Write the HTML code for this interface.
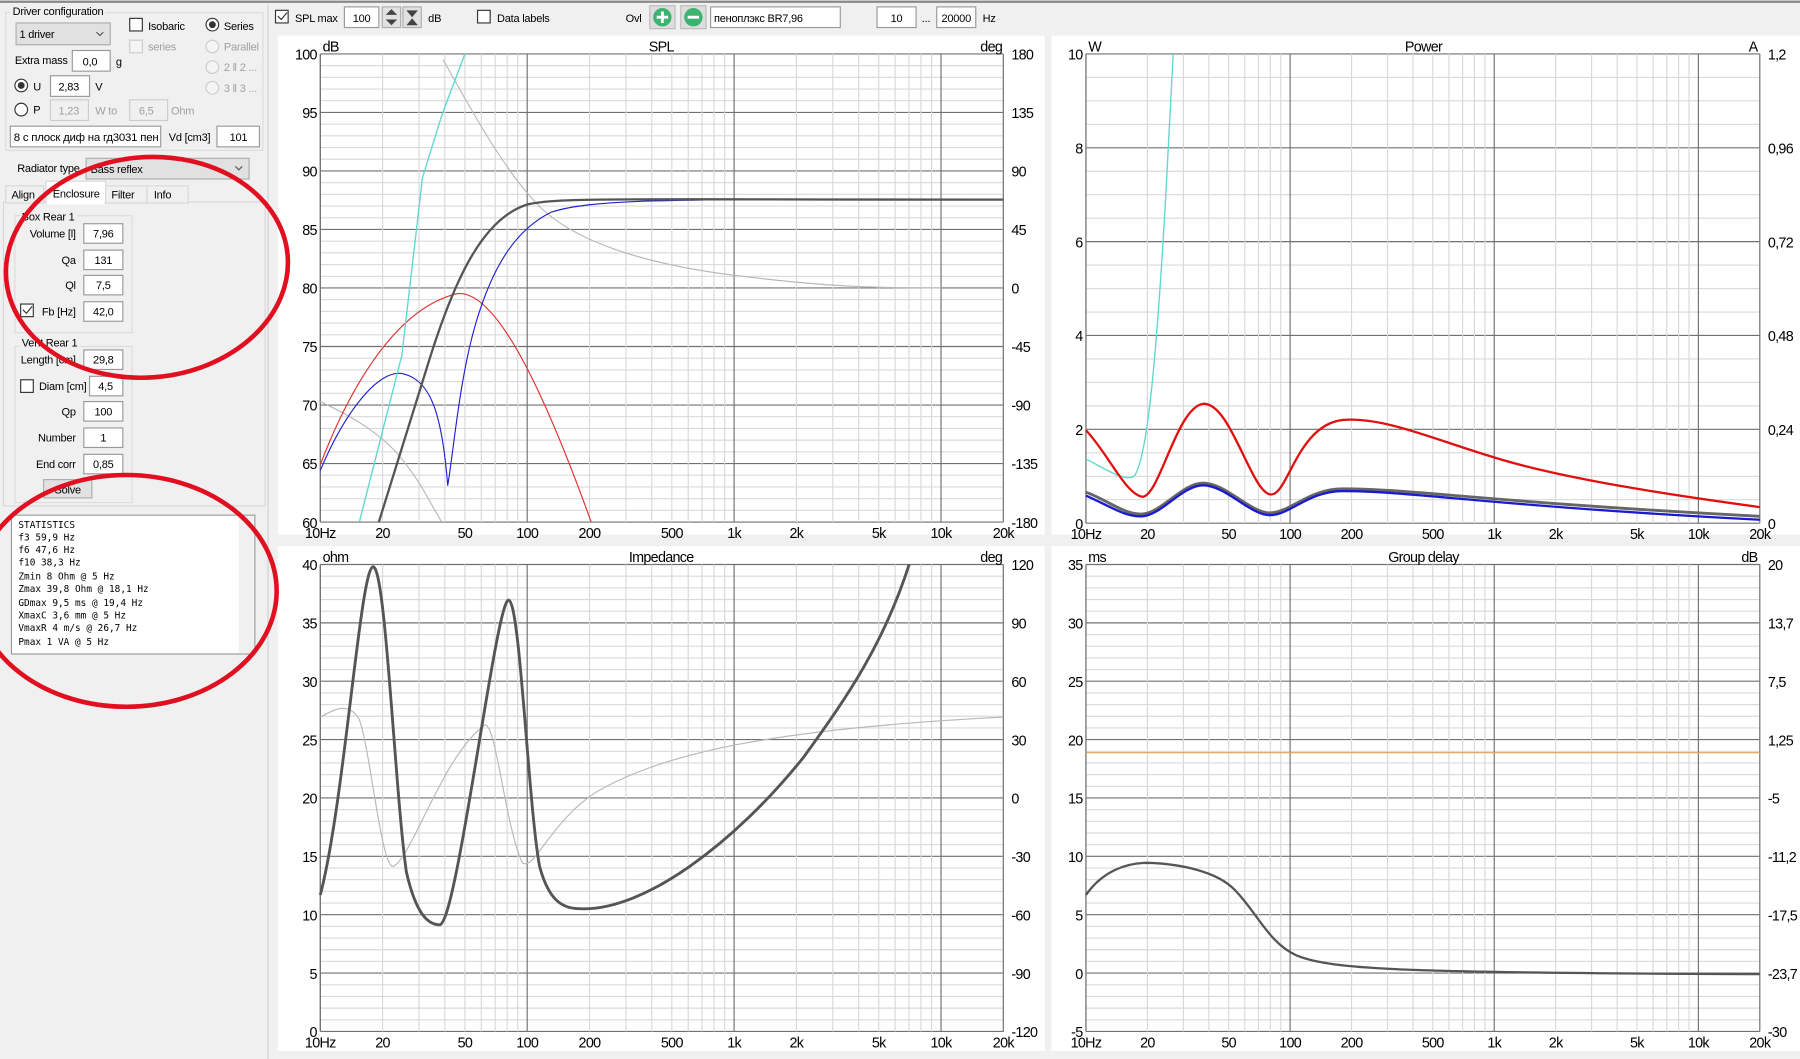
<!DOCTYPE html>
<html><head><meta charset="utf-8">
<style>
html,body{margin:0;padding:0;background:#f0f0f0;overflow:hidden}
svg{display:block}
text{font-family:"Liberation Sans","DejaVu Sans",sans-serif;fill:#000}
.m{font-family:"DejaVu Sans Mono","Liberation Mono",monospace;font-size:8.2px}
.s{font-size:9.6px;letter-spacing:-0.2px}
.a{font-size:12.5px;letter-spacing:-0.6px}
.g{fill:#a0a0a0}
</style></head><body>
<svg id="sv" width="1800" height="1059" viewBox="0 0 1568 923" preserveAspectRatio="none" xmlns="http://www.w3.org/2000/svg">
<rect width="1568" height="923" fill="#f0f0f0"/>
<line x1="0" y1="1.5" x2="1568" y2="1.5" stroke="#888" stroke-width="2"/>
<rect x="242" y="31" width="668" height="435" fill="#fff"/>
<rect x="916" y="31" width="652" height="435" fill="#fff"/>
<rect x="242" y="476" width="668" height="440" fill="#fff"/>
<rect x="916" y="476" width="652" height="440" fill="#fff"/>
<line x1="233.5" y1="4" x2="233.5" y2="923" stroke="#d0d0d0"/>
<g id="grid"></g>

<!-- LEFT PANEL -->
<rect x="5" y="11" width="224" height="120" fill="none" stroke="#dcdcdc"/>
<rect x="9" y="4" width="83" height="12" fill="#f0f0f0"/>
<text x="11" y="13" class="s">Driver configuration</text>
<rect x="14" y="20" width="82" height="19" fill="#e1e1e1" stroke="#adadad"/>
<text x="17" y="33" class="s">1 driver</text>
<path d="M84 28l3 3 3-3" fill="none" stroke="#555"/>
<rect x="113" y="16" width="11" height="11" fill="#fff" stroke="#333"/><text x="129" y="26" class="s">Isobaric</text>
<rect x="113" y="35" width="11" height="11" fill="#f4f4f4" stroke="#ccc"/><text x="129" y="44" class="s g">series</text>
<circle cx="185" cy="21.5" r="5.5" fill="#fff" stroke="#333"/><circle cx="185" cy="21.5" r="3" fill="#333"/><text x="195" y="26" class="s">Series</text>
<circle cx="185" cy="40.5" r="5.5" fill="#f4f4f4" stroke="#ccc"/><text x="195" y="44" class="s g">Parallel</text>
<circle cx="185" cy="58.5" r="5.5" fill="#f4f4f4" stroke="#ccc"/><text x="195" y="62" class="s g">2 ‖ 2 ...</text>
<circle cx="185" cy="76.5" r="5.5" fill="#f4f4f4" stroke="#ccc"/><text x="195" y="80" class="s g">3 ‖ 3 ...</text>
<text x="13" y="56" class="s">Extra mass</text>
<rect x="63" y="44" width="33" height="18" fill="#fff" stroke="#999"/><text x="72" y="57" class="s">0,0</text><text x="101" y="57" class="s">g</text>
<circle cx="18.5" cy="74.5" r="5.5" fill="#fff" stroke="#333"/><circle cx="18.5" cy="74.5" r="3" fill="#333"/><text x="29" y="79" class="s">U</text>
<rect x="44" y="66" width="34" height="18" fill="#fff" stroke="#999"/><text x="51" y="79" class="s">2,83</text><text x="83" y="79" class="s">V</text>
<circle cx="18.5" cy="95.5" r="5.5" fill="#fff" stroke="#333"/><text x="29" y="99" class="s">P</text>
<rect x="44" y="87" width="33" height="18" fill="#f0f0f0" stroke="#ccc"/><text x="51" y="100" class="s g">1,23</text><text x="83" y="100" class="s g">W to</text>
<rect x="113" y="87" width="33" height="18" fill="#f0f0f0" stroke="#ccc"/><text x="121" y="100" class="s g">6,5</text><text x="149" y="100" class="s g">Ohm</text>
<rect x="9" y="110" width="131" height="18" fill="#fff" stroke="#999"/><text x="12" y="123" class="s" textLength="126" lengthAdjust="spacingAndGlyphs">8 с плоск диф на гд3031 пен</text>
<text x="147" y="123" class="s">Vd [cm3]</text>
<rect x="189" y="110" width="37" height="18" fill="#fff" stroke="#999"/><text x="200" y="123" class="s">101</text>
<text x="15" y="150" class="s">Radiator type</text>
<rect x="75" y="138" width="142" height="18" fill="#e1e1e1" stroke="#adadad"/><text x="79" y="151" class="s">Bass reflex</text>
<path d="M205 145l3 3 3-3" fill="none" stroke="#555"/>
<rect x="3" y="176" width="228" height="265" fill="#f0f0f0" stroke="#d8d8d8"/>
<rect x="5" y="162" width="33" height="15" fill="#f0f0f0" stroke="#d8d8d8"/><text x="10" y="173" class="s">Align</text>
<rect x="40" y="158" width="52" height="19" fill="#fff" stroke="#d8d8d8"/><line x1="41" y1="177" x2="91" y2="177" stroke="#fff" stroke-width="2"/><text x="46" y="172" class="s">Enclosure</text>
<rect x="92" y="162" width="36" height="15" fill="#f0f0f0" stroke="#d8d8d8"/><text x="97" y="173" class="s">Filter</text>
<rect x="128" y="162" width="36" height="15" fill="#f0f0f0" stroke="#d8d8d8"/><text x="134" y="173" class="s">Info</text>
<rect x="13" y="188" width="102" height="102" fill="none" stroke="#dcdcdc"/>
<rect x="17" y="182" width="50" height="12" fill="#f0f0f0"/><text x="19" y="192" class="s">Box Rear 1</text>
<text x="66" y="207" class="s" text-anchor="end">Volume [l]</text><rect x="73" y="195" width="34" height="17" fill="#fff" stroke="#999"/><text x="90" y="207" class="s" text-anchor="middle">7,96</text>
<text x="66" y="230" class="s" text-anchor="end">Qa</text><rect x="73" y="218" width="34" height="17" fill="#fff" stroke="#999"/><text x="90" y="230" class="s" text-anchor="middle">131</text>
<text x="66" y="252" class="s" text-anchor="end">Ql</text><rect x="73" y="240" width="34" height="17" fill="#fff" stroke="#999"/><text x="90" y="252" class="s" text-anchor="middle">7,5</text>
<rect x="18" y="265" width="11" height="11" fill="#fff" stroke="#333"/><path d="M20 270l3 3 5-6" fill="none" stroke="#333"/>
<text x="66" y="275" class="s" text-anchor="end">Fb [Hz]</text><rect x="73" y="263" width="34" height="17" fill="#fff" stroke="#999"/><text x="90" y="275" class="s" text-anchor="middle">42,0</text>
<rect x="13" y="302" width="102" height="136" fill="none" stroke="#dcdcdc"/>
<rect x="17" y="295" width="53" height="12" fill="#f0f0f0"/><text x="19" y="302" class="s">Vent Rear 1</text>
<text x="66" y="317" class="s" text-anchor="end">Length [cm]</text><rect x="73" y="305" width="34" height="17" fill="#fff" stroke="#999"/><text x="90" y="317" class="s" text-anchor="middle">29,8</text>
<rect x="18" y="331" width="11" height="11" fill="#fff" stroke="#333"/><text x="34" y="340" class="s">Diam [cm]</text><rect x="78" y="328" width="29" height="17" fill="#fff" stroke="#999"/><text x="92" y="340" class="s" text-anchor="middle">4,5</text>
<text x="66" y="362" class="s" text-anchor="end">Qp</text><rect x="73" y="350" width="34" height="17" fill="#fff" stroke="#999"/><text x="90" y="362" class="s" text-anchor="middle">100</text>
<text x="66" y="385" class="s" text-anchor="end">Number</text><rect x="73" y="373" width="34" height="17" fill="#fff" stroke="#999"/><text x="90" y="385" class="s" text-anchor="middle">1</text>
<text x="66" y="408" class="s" text-anchor="end">End corr</text><rect x="73" y="396" width="34" height="17" fill="#fff" stroke="#999"/><text x="90" y="408" class="s" text-anchor="middle">0,85</text>
<rect x="38" y="418" width="42" height="16" fill="#e1e1e1" stroke="#adadad"/><text x="59" y="430" class="s" text-anchor="middle">Solve</text>
<rect x="10" y="449" width="212" height="121" fill="#fff" stroke="#999"/>
<rect x="208" y="450" width="13" height="119" fill="#f0f0f0"/>
<text class="m"><tspan x="16" y="460">STATISTICS</tspan><tspan x="16" y="471">f3 59,9 Hz</tspan><tspan x="16" y="482">f6 47,6 Hz</tspan><tspan x="16" y="493">f10 38,3 Hz</tspan><tspan x="16" y="505">Zmin 8 Ohm @ 5 Hz</tspan><tspan x="16" y="516">Zmax 39,8 Ohm @ 18,1 Hz</tspan><tspan x="16" y="528">GDmax 9,5 ms  @ 19,4 Hz</tspan><tspan x="16" y="539">XmaxC 3,6 mm  @ 5 Hz</tspan><tspan x="16" y="550">VmaxR 4 m/s @ 26,7 Hz</tspan><tspan x="16" y="562">Pmax 1 VA  @ 5 Hz</tspan></text>

<!-- TOP TOOLBAR -->
<rect x="240" y="9" width="11" height="11" fill="#fff" stroke="#333"/><path d="M242 14l3 3 5-6" fill="none" stroke="#333"/>
<text x="257" y="19" class="s">SPL max</text>
<rect x="300" y="6" width="30" height="18" fill="#fff" stroke="#999"/><text x="315" y="19" class="s" text-anchor="middle">100</text>
<rect x="333" y="6" width="16" height="18" fill="#e1e1e1" stroke="#adadad"/><path d="M336 13l5-5 5 5zM336 17l5 5 5-5z" fill="#444"/>
<rect x="351" y="6" width="16" height="18" fill="#e1e1e1" stroke="#adadad"/><path d="M354 9h10l-5 6zM354 22h10l-5-6z" fill="#444"/>
<text x="373" y="19" class="s">dB</text>
<rect x="416" y="9" width="11" height="11" fill="#fff" stroke="#333"/><text x="433" y="19" class="s">Data labels</text>
<text x="545" y="19" class="s">Ovl</text>
<rect x="566" y="5" width="22" height="20" fill="#ddd" stroke="#bbb"/><circle cx="577" cy="15" r="8" fill="#3cb371"/><path d="M572 15h10M577 10v10" stroke="#fff" stroke-width="2.5"/>
<rect x="593" y="5" width="22" height="20" fill="#ddd" stroke="#bbb"/><circle cx="604" cy="15" r="8" fill="#3cb371"/><path d="M599 15h10" stroke="#fff" stroke-width="2.5"/>
<rect x="619" y="6" width="113" height="18" fill="#fff" stroke="#999"/><text x="622" y="19" class="s">пеноплэкс BR7,96</text>
<rect x="764" y="6" width="34" height="18" fill="#fff" stroke="#999"/><text x="781" y="19" class="s" text-anchor="middle">10</text>
<text x="803" y="19" class="s">...</text>
<rect x="816" y="6" width="34" height="18" fill="#fff" stroke="#999"/><text x="833" y="19" class="s" text-anchor="middle">20000</text>
<text x="856" y="19" class="s">Hz</text>

<g class="a">
<text x="576" y="45" text-anchor="middle" class="a">SPL</text>
<text x="281" y="45" class="a">dB</text><text x="873" y="45" class="a" text-anchor="end">deg</text>
<text x="1240" y="45" text-anchor="middle" class="a">Power</text>
<text x="948" y="45" class="a">W</text><text x="1531" y="45" class="a" text-anchor="end">A</text>
<text x="576" y="490" text-anchor="middle" class="a">Impedance</text>
<text x="281" y="490" class="a">ohm</text><text x="873" y="490" class="a" text-anchor="end">deg</text>
<text x="1240" y="490" text-anchor="middle" class="a">Group delay</text>
<text x="948" y="490" class="a">ms</text><text x="1531" y="490" class="a" text-anchor="end">dB</text>
</g>
<g id="labels"></g>

<g fill="none" stroke-linejoin="round">
<path d="M386 52 C410 95 440 150 470 180 S560 230 640 240 S760 251 820 251" stroke="#b8b8b8" stroke-width="1"/>
<path d="M279 350 C300 360 330 375 350 400 S375 440 385 455" stroke="#b8b8b8" stroke-width="1"/>
<path d="M279 405 C300 350 340 270 398 256 C430 252 470 330 515 455" stroke="#e03030" stroke-width="1"/>
<path d="M279 410 C300 360 330 320 352 326 C375 332 385 360 390 423 C395 395 400 330 415 280 C430 230 450 200 480 185 C520 172 600 174 874 174" stroke="#2020d0" stroke-width="1"/>
<path d="M330 455 L372 320 C395 245 420 190 460 178 C490 172 530 174 874 174" stroke="#555" stroke-width="2"/>
<path d="M313 455 L350 310 L368 155 L385 100 L405 47" stroke="#60d8d0" stroke-width="1.2"/>
<path d="M946 400 C965 410 980 420 988 415 C1000 400 1008 300 1015 180 L1022 47" stroke="#60d8d0" stroke-width="1.2"/>
<path d="M946 375 C965 395 980 430 995 433 C1010 433 1025 355 1048 352 C1072 350 1090 430 1107 431 C1122 432 1130 370 1170 366 C1210 363 1260 388 1320 404 S1460 432 1533 442" stroke="#e01010" stroke-width="2"/>
<path d="M946 429 C965 436 980 449 995 448 C1012 447 1030 421 1048 421 C1068 421 1090 448 1107 447 C1125 446 1140 426 1170 426 C1230 426 1300 438 1533 450" stroke="#666" stroke-width="2.5"/>
<path d="M946 432 C965 440 980 451 995 450 C1012 449 1030 423 1048 423 C1068 423 1090 450 1107 449 C1125 448 1140 428 1170 428 C1230 428 1300 441 1533 453" stroke="#1a1ad0" stroke-width="2"/>
<path d="M279 625 C292 618 302 612 312 625 C322 645 332 760 343 755 C360 745 385 660 422 632 C432 628 440 720 455 752 C465 760 480 715 520 690 C580 655 680 635 874 625" stroke="#b8b8b8" stroke-width="1"/>
<path d="M279 780 C300 700 314 494 325 494 C336 494 344 690 354 760 C362 795 372 806 383 806 C398 806 432 523 443 523 C453 523 460 700 470 755 C478 785 490 792 505 792 C560 795 640 735 700 660 C740 605 770 560 792 492" stroke="#555" stroke-width="2.5"/>
<line x1="946" y1="656" x2="1533" y2="656" stroke="#e0a050" stroke-width="1"/>
<path d="M946 780 C960 760 980 752 1000 752 C1030 753 1060 760 1075 775 C1095 795 1105 822 1130 833 C1160 845 1220 848 1533 849" stroke="#555" stroke-width="2"/>
</g>

<ellipse cx="128" cy="233" rx="123" ry="96" fill="none" stroke="#e01020" stroke-width="4" transform="rotate(-5 128 233)"/>
<ellipse cx="110" cy="515" rx="131" ry="101" fill="none" stroke="#e01020" stroke-width="4"/>
</svg>
<script>
(function(){
var NS="http://www.w3.org/2000/svg",G=document.getElementById("grid"),L=document.getElementById("labels");
function ln(x1,y1,x2,y2,c,w){var e=document.createElementNS(NS,"line");e.setAttribute("x1",x1);e.setAttribute("y1",y1);e.setAttribute("x2",x2);e.setAttribute("y2",y2);e.setAttribute("stroke",c);e.setAttribute("stroke-width",w||1);G.appendChild(e);}
function tx(x,y,s,anc){var e=document.createElementNS(NS,"text");e.setAttribute("x",x);e.setAttribute("y",y);e.setAttribute("class","a");if(anc)e.setAttribute("text-anchor",anc);e.textContent=s;L.appendChild(e);}
function plot(x0,x1,y0,y1,nMinor,nMajor,left,right){
 var dec=(x1-x0)/Math.log10(2000);
 var n=nMajor*nMinor;
 for(var i=0;i<=n;i++){var y=y0+(y1-y0)*i/n;var maj=i%nMinor==0;ln(x0,y,x1,y,maj?"#707070":"#dadada",1);}
 for(var d=0;d<4;d++)for(var k=1;k<10;k++){var f=Math.pow(10,d)*k;if(f>2000)break;var x=x0+dec*Math.log10(f);ln(x,y0,x,y1,k==1?"#707070":"#d8d8d8",1);}
 ln(x1,y0,x1,y1,"#707070",1);ln(x0,y0,x0,y1,"#707070",1);
 for(i=0;i<=nMajor;i++){var yy=y0+(y1-y0)*i/nMajor+5;tx(x0-3,yy,left[i],"end");tx(x1+7,yy,right[i]);}
 var fl=[[1,"10Hz"],[2,"20"],[5,"50"],[10,"100"],[20,"200"],[50,"500"],[100,"1k"],[200,"2k"],[500,"5k"],[1000,"10k"],[2000,"20k"]];
 fl.forEach(function(p){tx(x0+dec*Math.log10(p[0]),y1+14,p[1],"middle");});
}
plot(279,874,47,455,5,8,["100","95","90","85","80","75","70","65","60"],["180","135","90","45","0","-45","-90","-135","-180"]);
plot(946,1533,47,456,4,5,["10","8","6","4","2","0"],["1,2","0,96","0,72","0,48","0,24","0"]);
plot(279,874,492,899,5,8,["40","35","30","25","20","15","10","5","0"],["120","90","60","30","0","-30","-60","-90","-120"]);
plot(946,1533,492,899,5,8,["35","30","25","20","15","10","5","0","-5"],["20","13,7","7,5","1,25","-5","-11,2","-17,5","-23,7","-30"]);
})();
</script>
</body></html>
